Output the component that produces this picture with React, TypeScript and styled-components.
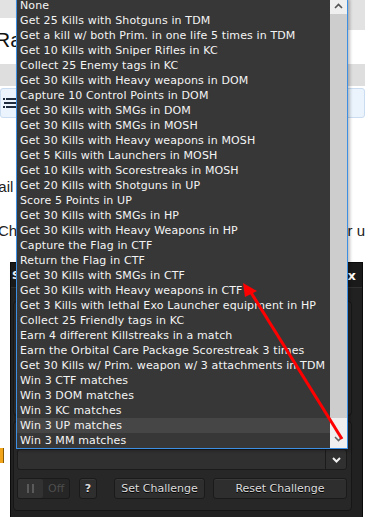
import React from 'react';
import styled, { createGlobalStyle } from 'styled-components';

const GlobalStyle = createGlobalStyle`
  html, body {
    margin: 0;
    padding: 0;
    background: #fff;
  }
  body {
    font-family: "Liberation Sans", Arial, sans-serif;
    overflow: hidden;
  }
`;

const challenges = [
  'None',
  'Get 25 Kills with Shotguns in TDM',
  'Get a kill w/ both Prim. in one life 5 times in TDM',
  'Get 10 Kills with Sniper Rifles in KC',
  'Collect 25 Enemy tags in KC',
  'Get 30 Kills with Heavy weapons in DOM',
  'Capture 10 Control Points in DOM',
  'Get 30 Kills with SMGs in DOM',
  'Get 30 Kills with SMGs in MOSH',
  'Get 30 Kills with Heavy weapons in MOSH',
  'Get 5 Kills with Launchers in MOSH',
  'Get 10 Kills with Scorestreaks in MOSH',
  'Get 20 Kills with Shotguns in UP',
  'Score 5 Points in UP',
  'Get 30 Kills with SMGs in HP',
  'Get 30 Kills with Heavy Weapons in HP',
  'Capture the Flag in CTF',
  'Return the Flag in CTF',
  'Get 30 Kills with SMGs in CTF',
  'Get 30 Kills with Heavy weapons in CTF',
  'Get 3 Kills with lethal Exo Launcher equipment in HP',
  'Collect 25 Friendly tags in KC',
  'Earn 4 different Killstreaks in a match',
  'Earn the Orbital Care Package Scorestreak 3 times',
  'Get 30 Kills w/ Prim. weapon w/ 3 attachments in TDM',
  'Win 3 CTF matches',
  'Win 3 DOM matches',
  'Win 3 KC matches',
  'Win 3 UP matches',
  'Win 3 MM matches',
];

const Page = styled.div`
  position: relative;
  width: 365px;
  height: 517px;
  overflow: hidden;
  background: #fff;
`;

const TopStrip = styled.div`
  height: 18px;
  background: #e2e2e2;
`;

const TitleRow = styled.div`
  display: flex;
  justify-content: space-between;
  align-items: flex-start;
  height: 46px;
`;

const Title = styled.h1`
  margin: 0 0 0 -5px;
  font-size: 21px;
  font-weight: normal;
  line-height: 44px;
  color: #111;
  white-space: nowrap;
`;

const TabNub = styled.div`
  width: 18px;
  height: 12px;
  background: #e2e2e2;
`;

const GreyBand = styled.div`
  height: 22px;
  background: #dedede;
`;

const NavBar = styled.div`
  margin-top: 2px;
  height: 30px;
  box-sizing: border-box;
  background: #ebf3fc;
  border: 1px solid #c9dcf0;
  border-radius: 3px;
  display: flex;
  align-items: center;
  padding-left: 2px;
`;

const Content = styled.div`
  height: 144px;
  box-sizing: border-box;
  padding-top: 59px;
  font-size: 15px;
  color: #222;
`;

const Line = styled.div<{ $gap?: number }>`
  display: flex;
  justify-content: space-between;
  height: 20px;
  line-height: 20px;
  margin-top: ${(p) => p.$gap ?? 0}px;
  white-space: nowrap;
  overflow: hidden;
`;

const Indented = styled.span<{ $shift: number }>`
  margin-left: ${(p) => p.$shift}px;
`;

const PanelRow = styled.div`
  display: flex;
`;

const Gutter = styled.div`
  width: 10px;
  padding-top: 186px;
`;

const OrangeMark = styled.div`
  width: 3px;
  height: 15px;
  background: #f2a51a;
  border-right: 1px solid #8a5a00;
`;

const Panel = styled.section`
  width: 353px;
  height: 260px;
  box-sizing: border-box;
  background: #212121;
  border: 1px solid #0b0b0b;
  font-family: "DejaVu Sans", Verdana, sans-serif;
`;

const TitleBar = styled.div`
  height: 24px;
  display: flex;
  align-items: center;
  justify-content: space-between;
  padding: 0 6px 0 1px;
  background: #1a1a1a;
  border-bottom: 1px solid #303030;
  color: #f2f2f2;
  font-size: 11px;
  font-weight: bold;
`;

const Close = styled.span`
  font-size: 13px;
  font-weight: bold;
  color: #fff;
`;

const PanelBody = styled.div`
  padding: 13px 10px 0 2px;
`;

const GroupBox = styled.div<{ $h: number; $top?: number }>`
  height: ${(p) => p.$h}px;
  margin-top: ${(p) => p.$top ?? 0}px;
  box-sizing: border-box;
  background: #272727;
  border: 1px solid #161616;
  border-radius: 4px;
  box-shadow: inset 0 1px 0 #2f2f2f;
  padding: 3px 4px 0 3px;
`;

const FieldLabel = styled.div`
  height: 24px;
  line-height: 24px;
  font-size: 11px;
  color: #cfcfcf;
`;

const Select = styled.div`
  height: 21px;
  box-sizing: border-box;
  display: flex;
  background: #303030;
  border: 1px solid #1b1b1b;
  border-radius: 3px;
`;

const SelectValue = styled.div`
  flex: 1;
`;

const SelectToggle = styled.div`
  width: 20px;
  border-left: 1px solid #1b1b1b;
  display: flex;
  align-items: center;
  justify-content: center;
`;

const ButtonRow = styled.div`
  display: flex;
  margin-top: 8px;
  height: 21px;
`;

const Toggle = styled.div`
  width: 53px;
  box-sizing: border-box;
  display: flex;
  align-items: center;
  background: #262626;
  border: 1px solid #1a1a1a;
  border-radius: 3px;
`;

const Knob = styled.div`
  width: 25px;
  height: 19px;
  display: flex;
  align-items: center;
  justify-content: center;
  gap: 3px;
  background: #323232;
  border-radius: 2px;
`;

const KnobBar = styled.span`
  width: 2px;
  height: 9px;
  background: #5a5a5a;
`;

const OffText = styled.span`
  margin-left: 5px;
  font-size: 11px;
  color: #4e4e4e;
`;

const Button = styled.button<{ $w?: number; $gap: number }>`
  ${(p) => (p.$w ? `width: ${p.$w}px;` : 'flex: 1;')}
  margin-left: ${(p) => p.$gap}px;
  height: 21px;
  padding: 0;
  box-sizing: border-box;
  background: #2e2e2e;
  border: 1px solid #1a1a1a;
  border-radius: 3px;
  box-shadow: inset 0 1px 0 #383838;
  color: #dcdcdc;
  font-family: "DejaVu Sans", Verdana, sans-serif;
  font-size: 11px;
  font-weight: ${(p) => (p.$w && p.$w < 30 ? 'bold' : 'normal')};
  text-shadow: 0 1px 0 #000;
`;

const Dropdown = styled.div`
  position: absolute;
  left: 16px;
  top: -3px;
  width: 332px;
  box-sizing: border-box;
  display: flex;
  border: 1px solid #3d8fe3;
  box-shadow: 2px 2px 3px rgba(0, 0, 0, 0.25);
  font-family: "DejaVu Sans", Verdana, sans-serif;
`;

const Items = styled.ul`
  flex: 1;
  margin: 0;
  padding: 0;
  list-style: none;
  background: #373737;
`;

const Item = styled.li<{ $hover?: boolean }>`
  height: 15px;
  line-height: 15px;
  padding-left: 3px;
  font-size: 11px;
  letter-spacing: 0.12px;
  color: #f4f4f4;
  white-space: nowrap;
  background: ${(p) => (p.$hover ? '#464646' : 'transparent')};
`;

const ScrollBar = styled.div`
  width: 17px;
  display: flex;
  flex-direction: column;
  background: #cdcdcd;
`;

const ScrollButton = styled.div<{ $h: number; $end?: boolean }>`
  height: ${(p) => p.$h}px;
  display: flex;
  align-items: ${(p) => (p.$end ? 'flex-end' : 'center')};
  justify-content: center;
  padding-bottom: ${(p) => (p.$end ? 6 : 0)}px;
  box-sizing: border-box;
  background: #efefef;
`;

const Thumb = styled.div`
  flex: 1;
  background: #cdcdcd;
`;

const Annotation = styled.svg`
  position: absolute;
  left: 0;
  top: 0;
  pointer-events: none;
`;

const Chevron = ({ up, color, w = 1.6 }: { up?: boolean; color: string; w?: number }) => (
  <svg width="9" height="6" viewBox="0 0 9 6">
    <polyline
      points={up ? '1,5 4.5,1.5 8,5' : '1,1 4.5,4.5 8,1'}
      fill="none"
      stroke={color}
      strokeWidth={w}
    />
  </svg>
);

const MenuIcon = () => (
  <svg width="13" height="10" viewBox="0 0 13 10">
    <rect x="0" y="0" width="2" height="2" fill="#1d2b3c" />
    <rect x="3" y="0" width="10" height="2" fill="#1d2b3c" />
    <rect x="1" y="4" width="12" height="2" fill="#1d2b3c" />
    <rect x="0" y="8" width="2" height="2" fill="#1d2b3c" />
    <rect x="3" y="8" width="10" height="2" fill="#1d2b3c" />
  </svg>
);

export default function App() {
  return (
    <Page>
      <GlobalStyle />
      <TopStrip />
      <TitleRow>
        <Title>Random</Title>
        <TabNub />
      </TitleRow>
      <GreyBand />
      <NavBar>
        <MenuIcon />
      </NavBar>
      <Content>
        <Line>
          <Indented $shift={-25}>Detail</Indented>
        </Line>
        <Line $gap={24}>
          <Indented $shift={-2}>Choose</Indented>
          <span>for u</span>
        </Line>
      </Content>
      <PanelRow>
        <Gutter>
          <OrangeMark />
        </Gutter>
        <Panel>
          <TitleBar>
            <span>Set</span>
            <Close>x</Close>
          </TitleBar>
          <PanelBody>
            <GroupBox $h={115} />
            <GroupBox $h={90} $top={5}>
              <FieldLabel />
              <Select>
                <SelectValue />
                <SelectToggle>
                  <Chevron color="#f0f0f0" w={2} />
                </SelectToggle>
              </Select>
              <ButtonRow>
                <Toggle>
                  <Knob>
                    <KnobBar />
                    <KnobBar />
                  </Knob>
                  <OffText>Off</OffText>
                </Toggle>
                <Button $w={18} $gap={9}>?</Button>
                <Button $w={91} $gap={17}>Set Challenge</Button>
                <Button $gap={8}>Reset Challenge</Button>
              </ButtonRow>
            </GroupBox>
          </PanelBody>
        </Panel>
      </PanelRow>

      <Dropdown>
        <Items>
          {challenges.map((c) => (
            <Item key={c} $hover={c === 'Win 3 UP matches'}>
              {c}
            </Item>
          ))}
        </Items>
        <ScrollBar>
          <ScrollButton $h={16}>
            <Chevron up color="#555" />
          </ScrollButton>
          <Thumb />
          <ScrollButton $h={30} $end>
            <Chevron color="#666" />
          </ScrollButton>
        </ScrollBar>
      </Dropdown>

      <Annotation width="365" height="517" viewBox="0 0 365 517">
        <line x1="342" y1="439" x2="250" y2="291" stroke="#ff0000" strokeWidth="3" />
        <polygon points="243,283 245,297 257,291" fill="#ff0000" />
      </Annotation>
    </Page>
  );
}
